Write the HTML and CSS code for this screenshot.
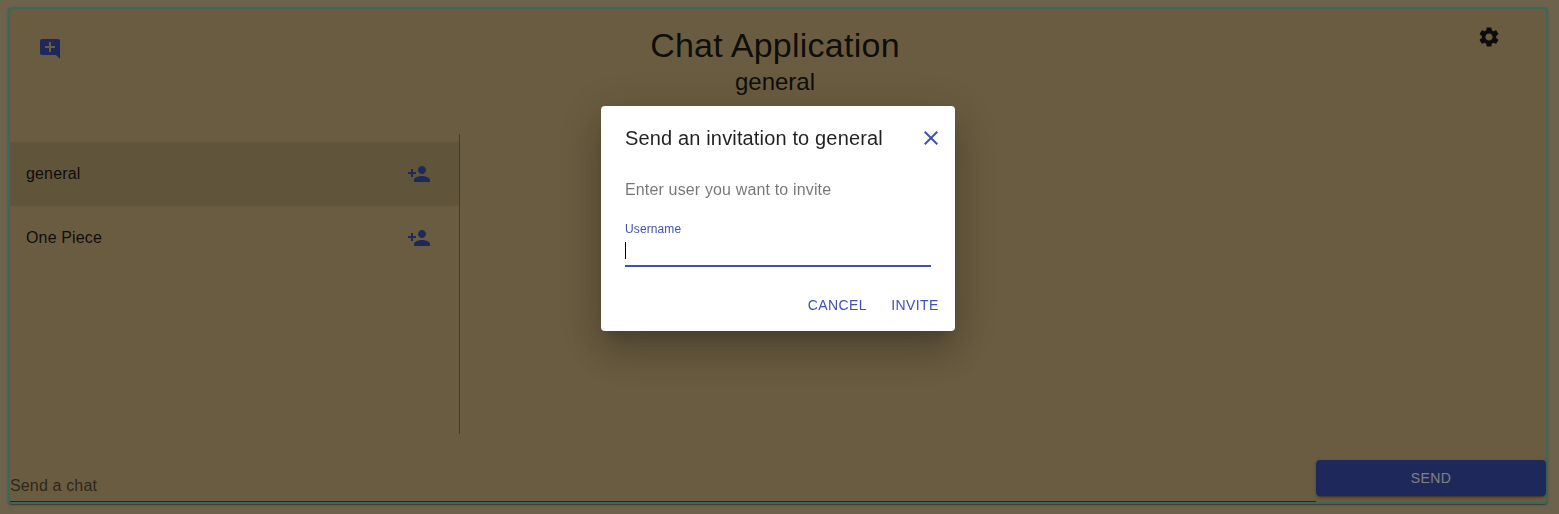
FILE: index.html
```html
<!DOCTYPE html>
<html lang="en">
<head>
<meta charset="utf-8">
<title>Chat Application</title>
<link rel="stylesheet" href="styles.css">
</head>
<body>
<main class="paper">
  <header class="header">
    <button class="icon-button add-chat" aria-label="Add chat"><svg class="icon primary" viewBox="0 0 24 24"><path d="M22 4c0-1.100-.9-2-2-2H4c-1.100 0-2 .9-2 2v12c0 1.100.9 2 2 2h14l4 4V4zm-5 7h-4v4h-2v-4H7V9h4V5h2v4h4v2z"/></svg></button>
    <div class="titles">
      <h1 class="title">Chat Application</h1>
      <h2 class="subtitle">general</h2>
    </div>
    <button class="icon-button settings" aria-label="Settings"><svg class="icon" viewBox="0 0 24 24"><path d="M19.140 12.940c.04-.3.06-.61.06-.94 0-.32-.02-.64-.07-.94l2.030-1.580c.18-.14.23-.41.12-.61l-1.920-3.320c-.12-.22-.37-.29-.59-.22l-2.390.96c-.5-.38-1.030-.7-1.620-.94l-.36-2.540c-.04-.24-.24-.41-.48-.41h-3.840c-.24 0-.43.17-.47.41l-.36 2.540c-.59.24-1.130.57-1.620.94l-2.390-.96c-.22-.08-.47 0-.59.22L2.740 8.870c-.12.21-.08.47.12.61l2.030 1.580c-.05.3-.09.63-.09.94s.02.64.07.94l-2.030 1.580c-.18.14-.23.41-.12.61l1.920 3.320c.12.22.37.29.59.22l2.390-.96c.5.38 1.030.7 1.620.94l.36 2.540c.05.24.24.41.48.41h3.840c.24 0 .44-.17.47-.41l.36-2.540c.59-.24 1.130-.56 1.620-.94l2.390.96c.22.08.47 0 .59-.22l1.920-3.320c.12-.22.07-.47-.12-.61l-2.010-1.580zM12 15.600c-1.980 0-3.600-1.620-3.600-3.600s1.620-3.600 3.600-3.600 3.600 1.620 3.600 3.600-1.620 3.600-3.600 3.600z"/></svg></button>
  </header>
  <ul class="rooms">
    <li class="room selected"><span>general</span><svg class="icon primary" viewBox="0 0 24 24"><path d="M15 12c2.210 0 4-1.790 4-4s-1.790-4-4-4-4 1.790-4 4 1.790 4 4 4zm-9-2V7H4v3H1v2h3v3h2v-3h3v-2H6zm9 4c-2.670 0-8 1.340-8 4v2h16v-2c0-2.660-5.330-4-8-4z"/></svg></li>
    <li class="room"><span>One Piece</span><svg class="icon primary" viewBox="0 0 24 24"><path d="M15 12c2.210 0 4-1.790 4-4s-1.790-4-4-4-4 1.790-4 4 1.790 4 4 4zm-9-2V7H4v3H1v2h3v3h2v-3h3v-2H6zm9 4c-2.670 0-8 1.340-8 4v2h16v-2c0-2.660-5.330-4-8-4z"/></svg></li>
  </ul>
  <footer class="composer">
    <div class="message">Send a chat</div>
    <button class="send">SEND</button>
  </footer>
</main>
<div class="backdrop">
  <section class="dialog" role="dialog">
    <div class="dialog-head">
      <h2 class="dialog-title">Send an invitation to general</h2>
      <svg class="icon close" viewBox="0 0 24 24"><path d="M19 6.410L17.590 5 12 10.590 6.410 5 5 6.410 10.590 12 5 17.590 6.410 19 12 13.410 17.590 19 19 17.590 13.410 12z"/></svg>
    </div>
    <div class="dialog-content">
      <p class="hint">Enter user you want to invite</p>
      <label class="label">Username</label>
      <div class="field"><span class="caret"></span></div>
    </div>
    <div class="actions"><button class="text-button">CANCEL</button><button class="text-button">INVITE</button></div>
  </section>
</div>
</body>
</html>
```
FILE: styles.css
```css
* { box-sizing: border-box; }
body {
  margin: 0;
  padding: 7px 11px 10px 8px;
  height: 514px;
  overflow: hidden;
  background: #dac498;
  font-family: "Liberation Sans", Arial, sans-serif;
  font-size: 16px;
  letter-spacing: 0.15px;
  color: rgba(0, 0, 0, 0.87);
}
h1, h2, p, ul { margin: 0; padding: 0; font-weight: 400; }
button { border: 0; padding: 0; background: none; font: inherit; color: inherit; }
.icon { display: block; width: 24px; height: 24px; fill: currentColor; }
.primary { color: #3f51b5; }
.paper {
  height: 497px;
  display: flex;
  flex-direction: column;
  border: 2px solid #74d0b8;
  border-radius: 4px;
  background: #d4b880;
  box-shadow: 0 2px 1px -1px rgba(0,0,0,.2), 0 1px 1px 0 rgba(0,0,0,.14), 0 1px 3px 0 rgba(0,0,0,.12);
}
.header {
  height: 125px;
  display: grid;
  grid-template-columns: 450px 630px 1fr;
  align-items: start;
}
.add-chat { padding: 28px 0 0 28px; }
.settings { padding: 16px 0 0 387px; }
.titles { padding-top: 15px; text-align: center; }
.title { font-size: 34px; line-height: 42px; letter-spacing: 0.25px; }
.subtitle { font-size: 24px; line-height: 32px; letter-spacing: 0; }
.rooms {
  width: 450px;
  height: 300px;
  padding: 8px 0;
  border-right: 1px solid #777;
  list-style: none;
}
.room {
  height: 64px;
  padding: 0 28px 0 16px;
  display: flex;
  align-items: center;
  justify-content: space-between;
}
.selected { background: #c0aa76; }
.composer { display: flex; align-items: flex-start; padding-top: 26px; }
.message {
  flex: 1;
  height: 42px;
  padding-top: 14px;
  line-height: 24px;
  color: rgba(0, 0, 0, 0.6);
  border-bottom: 1px solid rgba(0, 0, 0, 0.6);
}
.send {
  width: 230px;
  height: 36px;
  border-radius: 4px;
  background: #3f51b5;
  color: #fff;
  font-size: 14px;
  letter-spacing: 0.4px;
  box-shadow: 0 3px 1px -2px rgba(0,0,0,.2), 0 2px 2px 0 rgba(0,0,0,.14), 0 1px 5px 0 rgba(0,0,0,.12);
}
.backdrop {
  position: fixed;
  inset: 0;
  padding-top: 106px;
  display: flex;
  align-items: flex-start;
  justify-content: center;
  background: rgba(0, 0, 0, 0.5);
}
.dialog {
  width: 354px;
  height: 225px;
  margin-right: 3px;
  border-radius: 4px;
  background: #fff;
  box-shadow: 0 11px 15px -7px rgba(0,0,0,.2), 0 24px 38px 3px rgba(0,0,0,.14), 0 9px 46px 8px rgba(0,0,0,.12);
}
.dialog-head {
  height: 64px;
  padding: 0 12px 0 24px;
  display: flex;
  align-items: center;
  justify-content: space-between;
}
.dialog-title { font-size: 20px; line-height: 32px; letter-spacing: 0.15px; }
.close { color: #3f51b5; }
.dialog-content { padding: 8px 24px 0; }
.hint { line-height: 24px; color: rgba(0, 0, 0, 0.54); }
.label { display: block; margin-top: 19px; font-size: 12px; line-height: 16px; letter-spacing: 0.11px; color: #3f51b5; }
.field { height: 30px; padding-top: 5px; border-bottom: 2px solid #3f51b5; }
.caret { display: block; width: 1px; height: 17px; background: #000; }
.actions { display: flex; justify-content: flex-end; gap: 8px; padding: 20px 8px 0; }
.text-button { height: 36px; padding: 0 8px; min-width: 64px; color: #3f51b5; font-size: 14px; letter-spacing: 0.4px; }
```
